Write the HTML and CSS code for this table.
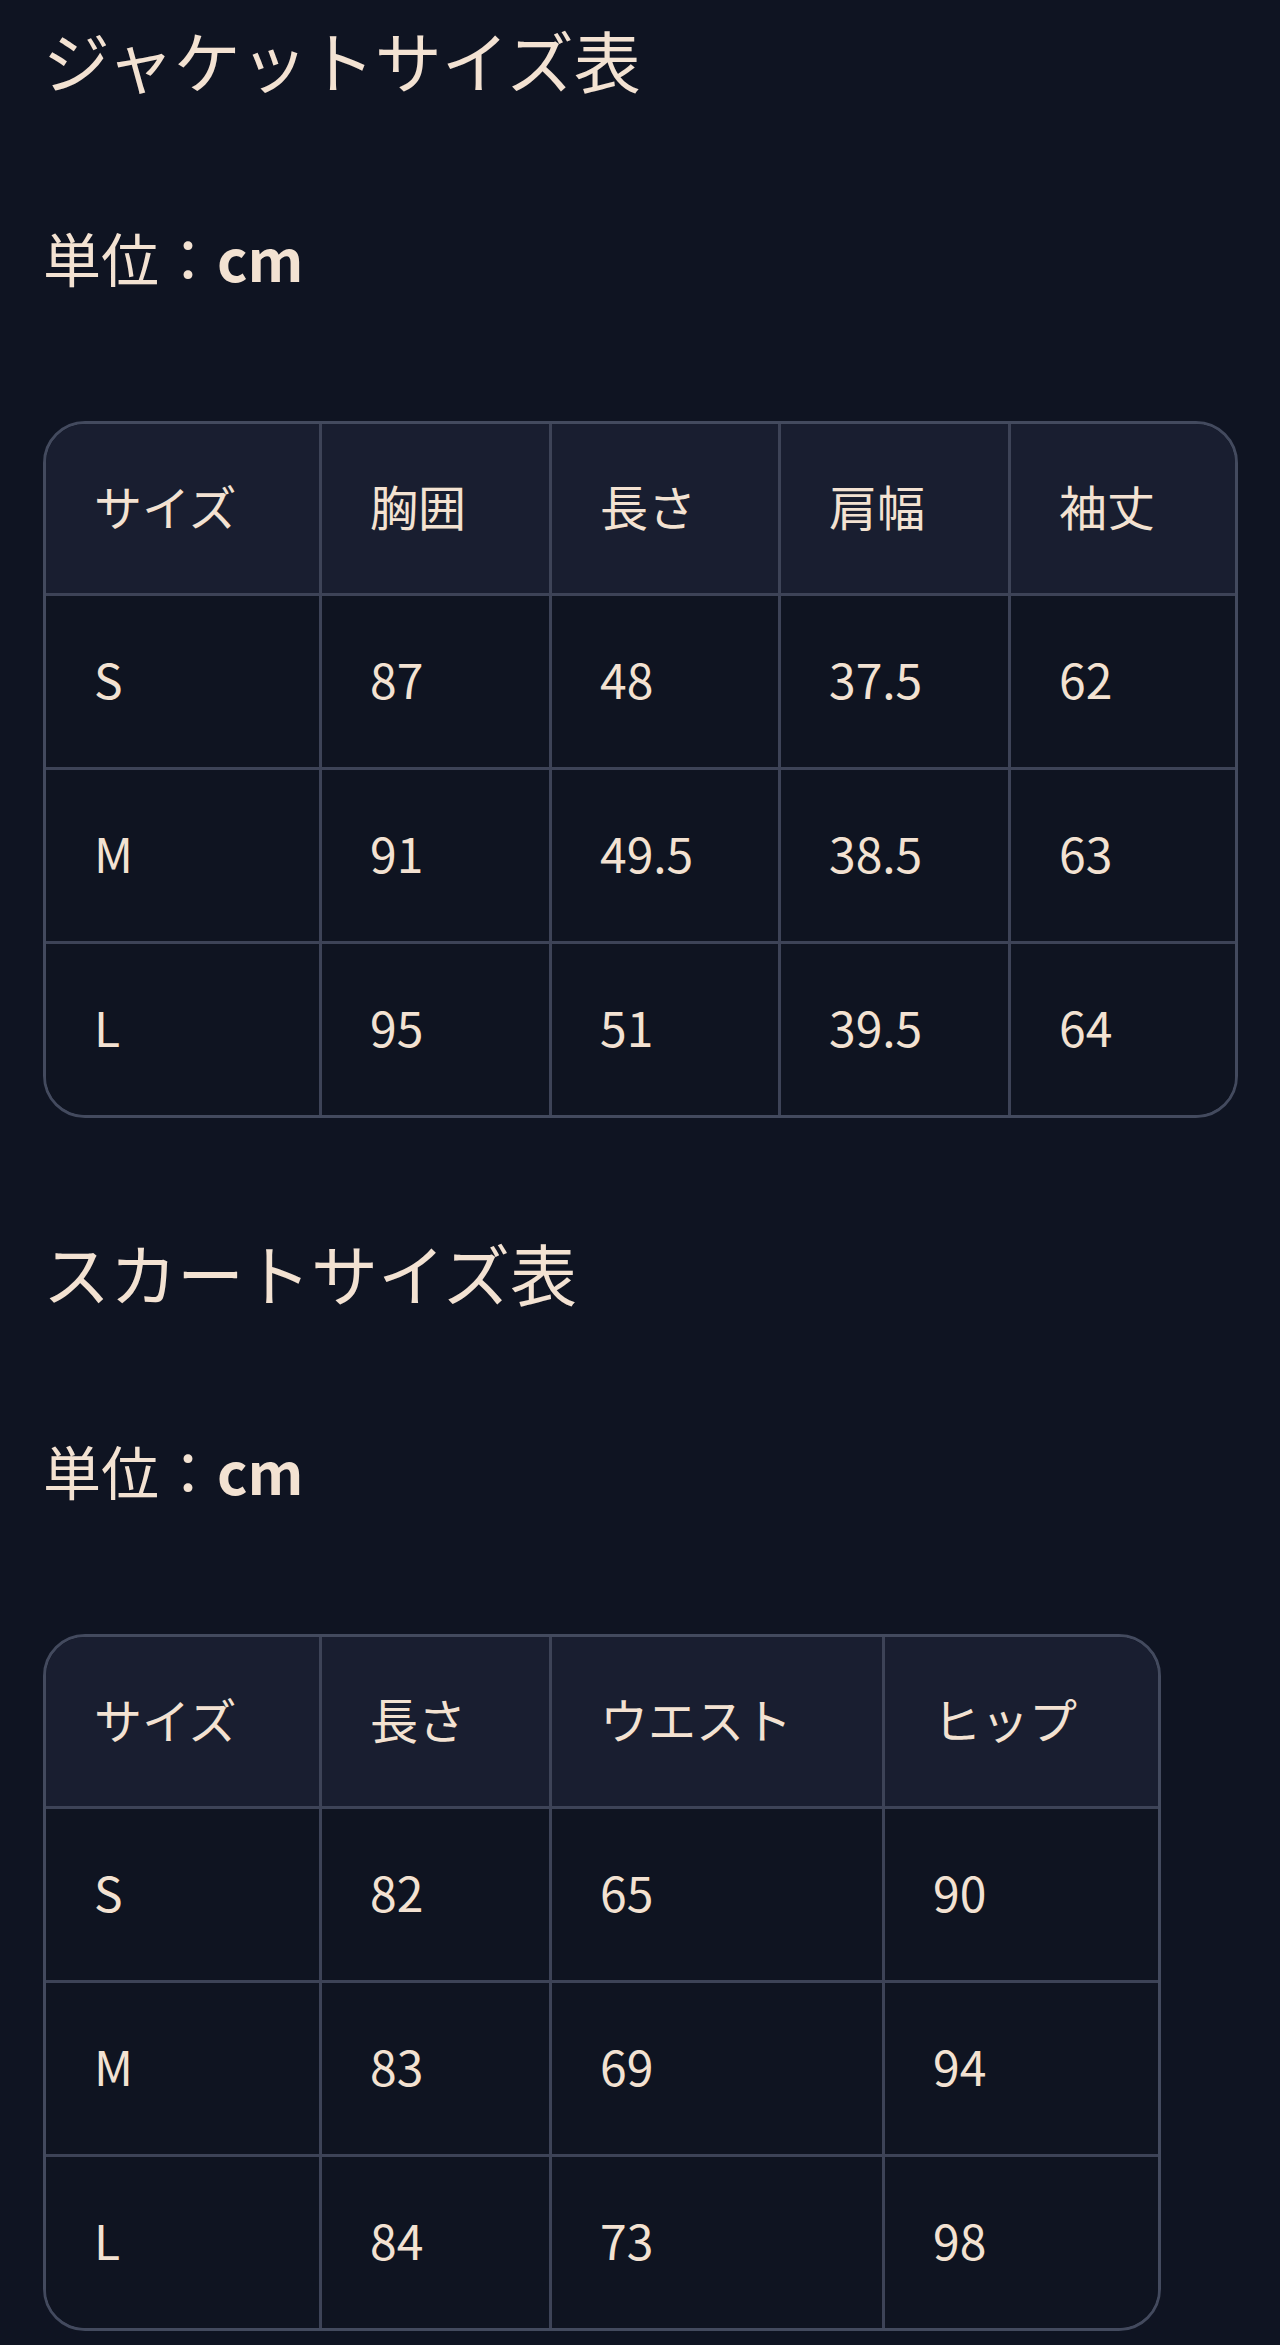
FILE: index.html
```html
<!DOCTYPE html>
<html lang="ja">
<head>
    <meta charset="UTF-8">
    <meta name="viewport" content="width=device-width, initial-scale=1.0">
    <title>サイズ表</title>
    <link rel="stylesheet" href="styles.css">
</head>
<body>

    <div class="page">

        <!-- Jacket sizes -->
        <section class="size-section">
            <h2 class="size-title">ジャケットサイズ表</h2>
            <p class="unit">単位：<strong>cm</strong></p>

            <div class="table-wrap">
                <table class="size-table jacket">
                    <colgroup>
                        <col class="col-size">
                        <col class="col-a">
                        <col class="col-b">
                        <col class="col-c">
                        <col class="col-d">
                    </colgroup>
                    <thead>
                        <tr>
                            <th>サイズ</th>
                            <th>胸囲</th>
                            <th>長さ</th>
                            <th>肩幅</th>
                            <th>袖丈</th>
                        </tr>
                    </thead>
                    <tbody>
                        <tr><td>S</td><td>87</td><td>48</td><td>37.5</td><td>62</td></tr>
                        <tr><td>M</td><td>91</td><td>49.5</td><td>38.5</td><td>63</td></tr>
                        <tr><td>L</td><td>95</td><td>51</td><td>39.5</td><td>64</td></tr>
                    </tbody>
                </table>
            </div>
        </section>

        <!-- Skirt sizes -->
        <section class="size-section">
            <h2 class="size-title">スカートサイズ表</h2>
            <p class="unit">単位：<strong>cm</strong></p>

            <div class="table-wrap">
                <table class="size-table skirt">
                    <colgroup>
                        <col class="col-size">
                        <col class="col-a">
                        <col class="col-wide">
                        <col class="col-last">
                    </colgroup>
                    <thead>
                        <tr>
                            <th>サイズ</th>
                            <th>長さ</th>
                            <th>ウエスト</th>
                            <th>ヒップ</th>
                        </tr>
                    </thead>
                    <tbody>
                        <tr><td>S</td><td>82</td><td>65</td><td>90</td></tr>
                        <tr><td>M</td><td>83</td><td>69</td><td>94</td></tr>
                        <tr><td>L</td><td>84</td><td>73</td><td>98</td></tr>
                    </tbody>
                </table>
            </div>
        </section>

    </div>

</body>
</html>
```

FILE: styles.css
```css
body {
    margin: 0;
    padding: 0;
    background-color: #0f1422;
    color: #f3e2d2;
    font-family: "Noto Sans CJK JP", "Noto Sans", sans-serif;
}

.page {
    padding: 19px 42px 17px 43px;
}

.size-section + .size-section {
    margin-top: 114px;
}

.size-title {
    margin: 0;
    font-size: 67px;
    font-weight: 400;
    line-height: 80px;
}

.unit {
    margin: 118px 0 124px;
    font-size: 58px;
    line-height: 80px;
}

.unit strong {
    font-weight: 700;
}

/* Table with rounded outer border */
.table-wrap {
    display: inline-block;
    border: 3px solid #434a5e;
    border-radius: 42px;
    overflow: hidden;
    vertical-align: top;
}

.size-table {
    border-collapse: separate;
    border-spacing: 0;
    table-layout: fixed;
    font-size: 48px;
    line-height: 75px;
}

.size-table.jacket {
    width: 1189px;
}

.size-table.skirt {
    width: 1112px;
}

.jacket .col-size { width: 276px; }
.jacket .col-a { width: 230px; }
.jacket .col-b { width: 229px; }
.jacket .col-c { width: 230px; }
.jacket .col-d { width: 224px; }

.skirt .col-size { width: 276px; }
.skirt .col-a { width: 230px; }
.skirt .col-wide { width: 333px; }
.skirt .col-last { width: 273px; }

.size-table th,
.size-table td {
    padding: 44px 48px 50px;
    text-align: left;
    font-weight: 400;
    white-space: nowrap;
    border-right: 3px solid #3d4357;
    border-bottom: 3px solid #3d4357;
}

.size-table th {
    background-color: #191e30;
}

.size-table td {
    padding-top: 45px;
    padding-bottom: 51px;
    background-color: #0f1421;
}

.size-table tr > :last-child {
    border-right: none;
}

.size-table tbody tr:last-child td {
    border-bottom: none;
}
```
